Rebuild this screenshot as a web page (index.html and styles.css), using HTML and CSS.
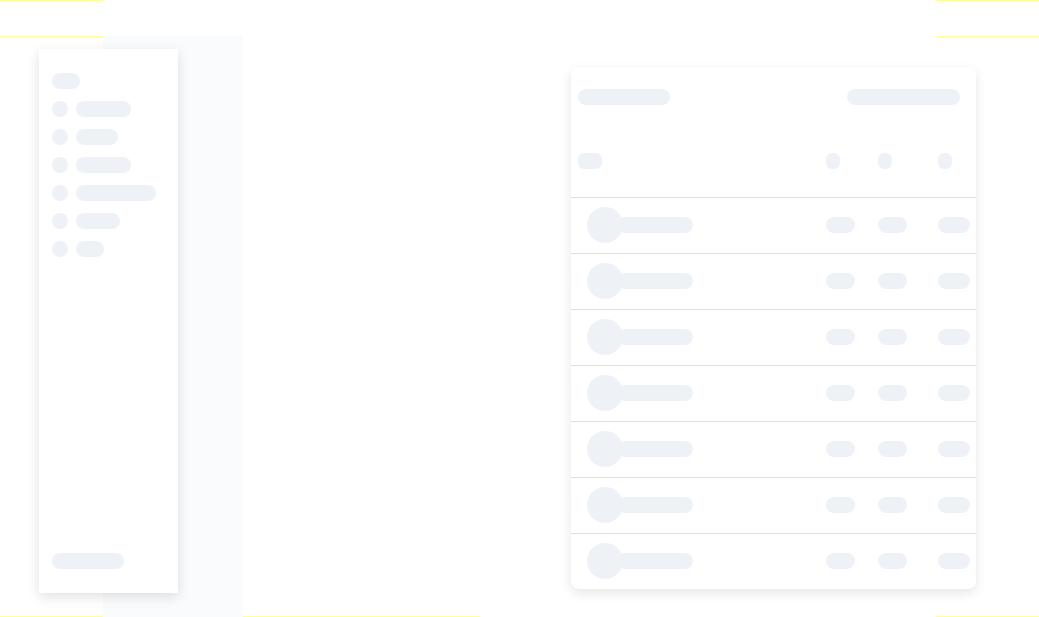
FILE: index.html
```html
<!DOCTYPE html>
<html lang="en">
<head>
  <meta charset="UTF-8" />
  <meta name="viewport" content="width=device-width, initial-scale=1.0" />
  <title>Loading</title>
  <link rel="stylesheet" href="styles.css">
</head>
<body>

  <div class="sidebar">
    <div class="sk sk-title"></div>
    <div class="nav-item"><span class="sk dot"></span><span class="sk bar" style="width:55px"></span></div>
    <div class="nav-item"><span class="sk dot"></span><span class="sk bar" style="width:42px"></span></div>
    <div class="nav-item"><span class="sk dot"></span><span class="sk bar" style="width:55px"></span></div>
    <div class="nav-item"><span class="sk dot"></span><span class="sk bar" style="width:80px"></span></div>
    <div class="nav-item"><span class="sk dot"></span><span class="sk bar" style="width:44px"></span></div>
    <div class="nav-item"><span class="sk dot"></span><span class="sk bar" style="width:28px"></span></div>
    <div class="sk sk-footer"></div>
  </div>

  <div class="table-card">
    <div class="card-top">
      <span class="sk card-title"></span>
      <span class="sk card-action"></span>
    </div>
    <div class="thead">
      <span class="sk th th-wide"></span>
      <span class="sk th"></span>
      <span class="sk th"></span>
      <span class="sk th"></span>
    </div>
    <div class="trow">
      <div class="who"><span class="sk avatar"></span><span class="sk name"></span></div>
      <span class="sk cell"></span><span class="sk cell"></span><span class="sk cell cell-wide"></span>
    </div>
    <div class="trow">
      <div class="who"><span class="sk avatar"></span><span class="sk name"></span></div>
      <span class="sk cell"></span><span class="sk cell"></span><span class="sk cell cell-wide"></span>
    </div>
    <div class="trow">
      <div class="who"><span class="sk avatar"></span><span class="sk name"></span></div>
      <span class="sk cell"></span><span class="sk cell"></span><span class="sk cell cell-wide"></span>
    </div>
    <div class="trow">
      <div class="who"><span class="sk avatar"></span><span class="sk name"></span></div>
      <span class="sk cell"></span><span class="sk cell"></span><span class="sk cell cell-wide"></span>
    </div>
    <div class="trow">
      <div class="who"><span class="sk avatar"></span><span class="sk name"></span></div>
      <span class="sk cell"></span><span class="sk cell"></span><span class="sk cell cell-wide"></span>
    </div>
    <div class="trow">
      <div class="who"><span class="sk avatar"></span><span class="sk name"></span></div>
      <span class="sk cell"></span><span class="sk cell"></span><span class="sk cell cell-wide"></span>
    </div>
    <div class="trow">
      <div class="who"><span class="sk avatar"></span><span class="sk name"></span></div>
      <span class="sk cell"></span><span class="sk cell"></span><span class="sk cell cell-wide"></span>
    </div>
  </div>

</body>
</html>
```

FILE: styles.css
```css
html, body {
  margin: 0;
  padding: 0;
}
body {
  font-family: 'Inter', 'Liberation Sans', sans-serif;
  width: 1039px;
  height: 617px;
  overflow: hidden;
  display: flex;
  align-items: flex-start;
  background-color: #ffffff;
  /* guide lines + pale column behind the sidebar */
  background-image:
    linear-gradient(#ffff9c, #ffff9c),
    linear-gradient(#ffff9c, #ffff9c),
    linear-gradient(#ffff9c, #ffff9c),
    linear-gradient(#ffff9c, #ffff9c),
    linear-gradient(#ffff9c, #ffff9c),
    linear-gradient(#ffff9c, #ffff9c),
    linear-gradient(#ffff9c, #ffff9c),
    linear-gradient(#fafbfd, #fafbfd);
  background-repeat: no-repeat;
  background-size:
    103px 1px, 103px 1px,
    103px 1px, 103px 1px,
    103px 1px, 237px 1px, 103px 1px,
    140px 581px;
  background-position:
    0 0, 936px 0,
    0 36px, 936px 36px,
    0 616px, 243px 616px, 936px 616px,
    103px 36px;
}

.sk {
  display: block;
  background-color: #eef2f7;
  border-radius: 8px;
  height: 16px;
  flex-shrink: 0;
}

/* sidebar */
.sidebar {
  box-sizing: border-box;
  width: 139px;
  height: 544px;
  margin: 49px 0 0 39px;
  padding: 24px 13px;
  background: white;
  box-shadow: 0 4px 12px rgba(0,0,0,0.12);
  display: flex;
  flex-direction: column;
  gap: 12px;
}
.sk-title {
  width: 28px;
}
.nav-item {
  display: flex;
  align-items: center;
  gap: 8px;
}
.dot {
  width: 16px;
  border-radius: 50%;
}
.sk-footer {
  width: 72px;
  margin-top: auto;
}

/* table card */
.table-card {
  box-sizing: border-box;
  width: 405px;
  height: 522px;
  margin: 67px 0 0 393px;
  background: white;
  border-radius: 8px;
  box-shadow: 0 4px 12px rgba(0,0,0,0.1);
  overflow: hidden;
}
.card-top {
  box-sizing: border-box;
  height: 58px;
  padding: 22px 16px 0 7px;
  display: flex;
  justify-content: space-between;
  align-items: flex-start;
}
.card-title {
  width: 92px;
}
.card-action {
  width: 113px;
}
.thead {
  box-sizing: border-box;
  height: 72px;
  padding-left: 7px;
  display: grid;
  grid-template-columns: 248px 52px 60px 1fr;
  align-items: center;
}
.th {
  width: 14px;
  border-radius: 6px;
}
.th-wide {
  width: 24px;
}
.trow {
  box-sizing: border-box;
  height: 56px;
  border-top: 1px solid #d9e2ec;
  padding: 0 0 1px 16px;
  display: grid;
  grid-template-columns: 239px 52px 60px 1fr;
  align-items: center;
}
.who {
  display: flex;
  align-items: center;
}
.avatar {
  width: 36px;
  height: 36px;
  border-radius: 50%;
  position: relative;
  z-index: 1;
}
.name {
  width: 76px;
  margin-left: -6px;
}
.cell {
  width: 29px;
}
.cell-wide {
  width: 32px;
}
```
